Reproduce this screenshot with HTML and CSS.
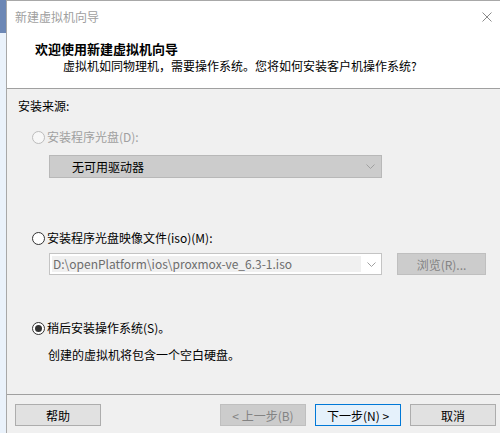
FILE: index.html
```html
<!DOCTYPE html>
<html lang="zh-CN">
<head>
    <meta charset="UTF-8">
    <title>新建虚拟机向导</title>
    <link rel="stylesheet" href="styles.css">
</head>
<body>
    <div class="desk">
        <div class="desk-top"></div>
        <div class="desk-bottom"></div>
    </div>
    <div class="window">
        <div class="header">
            <div class="titlebar">
                <span class="title">新建虚拟机向导</span>
                <svg class="close" width="10" height="10" viewBox="0 0 10 10">
                    <path d="M0.5 0.5L9.5 9.5M9.5 0.5L0.5 9.5" stroke="#8a8a8a" stroke-width="1" fill="none"/>
                </svg>
            </div>
            <h1>欢迎使用新建虚拟机向导</h1>
            <p class="subtitle">虚拟机如同物理机，需要操作系统。您将如何安装客户机操作系统?</p>
        </div>
        <div class="main">
            <div class="section-label">安装来源:</div>

            <label class="option disabled">
                <span class="radio"></span>安装程序光盘(D):
            </label>
            <div class="select disabled-select">
                <span>无可用驱动器</span>
                <svg class="chevron" width="9" height="5" viewBox="0 0 9 5">
                    <polyline points="0.5,0.5 4.5,4.5 8.5,0.5" stroke="#a0a0a0" fill="none"/>
                </svg>
            </div>

            <label class="option option-iso">
                <span class="radio"></span>安装程序光盘映像文件(iso)(M):
            </label>
            <div class="iso-row">
                <div class="combo">
                    <span class="combo-text">D:\openPlatform\ios\proxmox-ve_6.3-1.iso</span>
                    <span class="combo-arrow">
                        <svg width="9" height="5" viewBox="0 0 9 5">
                            <polyline points="0.5,0.5 4.5,4.5 8.5,0.5" stroke="#a0a0a0" fill="none"/>
                        </svg>
                    </span>
                </div>
                <button class="btn btn-disabled browse">浏览(R)...</button>
            </div>

            <label class="option option-later">
                <span class="radio checked"></span>稍后安装操作系统(S)。
            </label>
            <p class="note">创建的虚拟机将包含一个空白硬盘。</p>
        </div>
        <div class="footer">
            <button class="btn">帮助</button>
            <div class="spacer"></div>
            <button class="btn btn-disabled">&lt; 上一步(B)</button>
            <button class="btn btn-default">下一步(N) &gt;</button>
            <button class="btn">取消</button>
        </div>
    </div>
</body>
</html>
```

FILE: styles.css
```css
html, body {
    margin: 0;
    padding: 0;
    height: 433px;
    overflow: hidden;
}
body {
    display: flex;
    font-family: "Noto Sans CJK SC", "Noto Sans", sans-serif;
    font-size: 12px;
    line-height: 16px;
    color: #000;
    background: #fff;
}
.desk {
    width: 6px;
    display: flex;
    flex-direction: column;
}
.desk-top {
    height: 33px;
    background: #6c87b5;
}
.desk-bottom {
    flex: 1;
    background: #eaf2fb;
}
.window {
    flex: 1;
    display: flex;
    flex-direction: column;
    border-left: 1px solid #a8a8a8;
    border-top: 1px solid #a8a8a8;
}
.header {
    background: #fff;
    border-bottom: 1px solid #a0a0a0;
    padding-bottom: 14px;
}
.titlebar {
    height: 32px;
    display: flex;
    align-items: center;
    justify-content: space-between;
    padding: 0 8px 0 8px;
}
.title {
    color: #a0a0a0;
}
h1 {
    margin: 8px 0 0 28px;
    font-size: 13px;
    line-height: 16px;
    font-weight: bold;
}
.subtitle {
    margin: 1px 0 0 56px;
}
.main {
    flex: 1;
    background: #f0f0f0;
    padding: 9px 0 0 11px;
}
.section-label {
    height: 16px;
}
.option {
    display: flex;
    align-items: center;
    margin: 15px 0 0 14px;
    height: 16px;
}
.option.disabled {
    color: #a0a0a0;
}
.radio {
    width: 11px;
    height: 11px;
    border: 1px solid #333;
    border-radius: 50%;
    background: #fff;
    margin-right: 2px;
    display: flex;
    align-items: center;
    justify-content: center;
}
.disabled .radio {
    border-color: #bcbcbc;
    background: #f7f7f7;
}
.radio.checked::after {
    content: "";
    width: 7px;
    height: 7px;
    border-radius: 50%;
    background: #333;
}
.select {
    margin: 10px 0 0 31px;
    width: 331px;
    height: 21px;
    display: flex;
    align-items: center;
    justify-content: space-between;
}
.disabled-select {
    background: #cccccc;
    border: 1px solid #b8b8b8;
}
.disabled-select span {
    padding-left: 22px;
}
.chevron {
    margin-right: 6px;
}
.option-iso {
    margin-top: 52px;
}
.iso-row {
    display: flex;
    align-items: center;
    margin: 7px 0 0 31px;
}
.combo {
    width: 331px;
    height: 20px;
    border: 1px solid #c4c4c4;
    background: #fff;
    display: flex;
    align-items: stretch;
}
.combo-text {
    flex: 1;
    margin: 2px 0 2px 2px;
    padding-left: 1px;
    line-height: 16px;
    background: #f0f0f0;
    color: #6d6d6d;
    white-space: nowrap;
    overflow: hidden;
}
.combo-arrow {
    width: 20px;
    display: flex;
    align-items: center;
    justify-content: center;
}
.btn {
    width: 86px;
    height: 22px;
    padding: 0;
    font-family: inherit;
    font-size: 12px;
    color: #000;
    background: #e1e1e1;
    border: 1px solid #adadad;
}
.btn-disabled {
    background: #cccccc;
    border-color: #bfbfbf;
    color: #838383;
}
.btn-default {
    background: #e5f1fb;
    border-color: #0078d7;
}
.browse {
    width: 89px;
    margin-left: 15px;
}
.option-later {
    margin-top: 45px;
}
.note {
    margin: 11px 0 0 30px;
}
.footer {
    height: 29px;
    border-top: 1px solid #a0a0a0;
    background: #f0f0f0;
    display: flex;
    align-items: flex-start;
    gap: 9px;
    padding: 9px 4px 0 8px;
}
.spacer {
    flex: 1;
}
```
